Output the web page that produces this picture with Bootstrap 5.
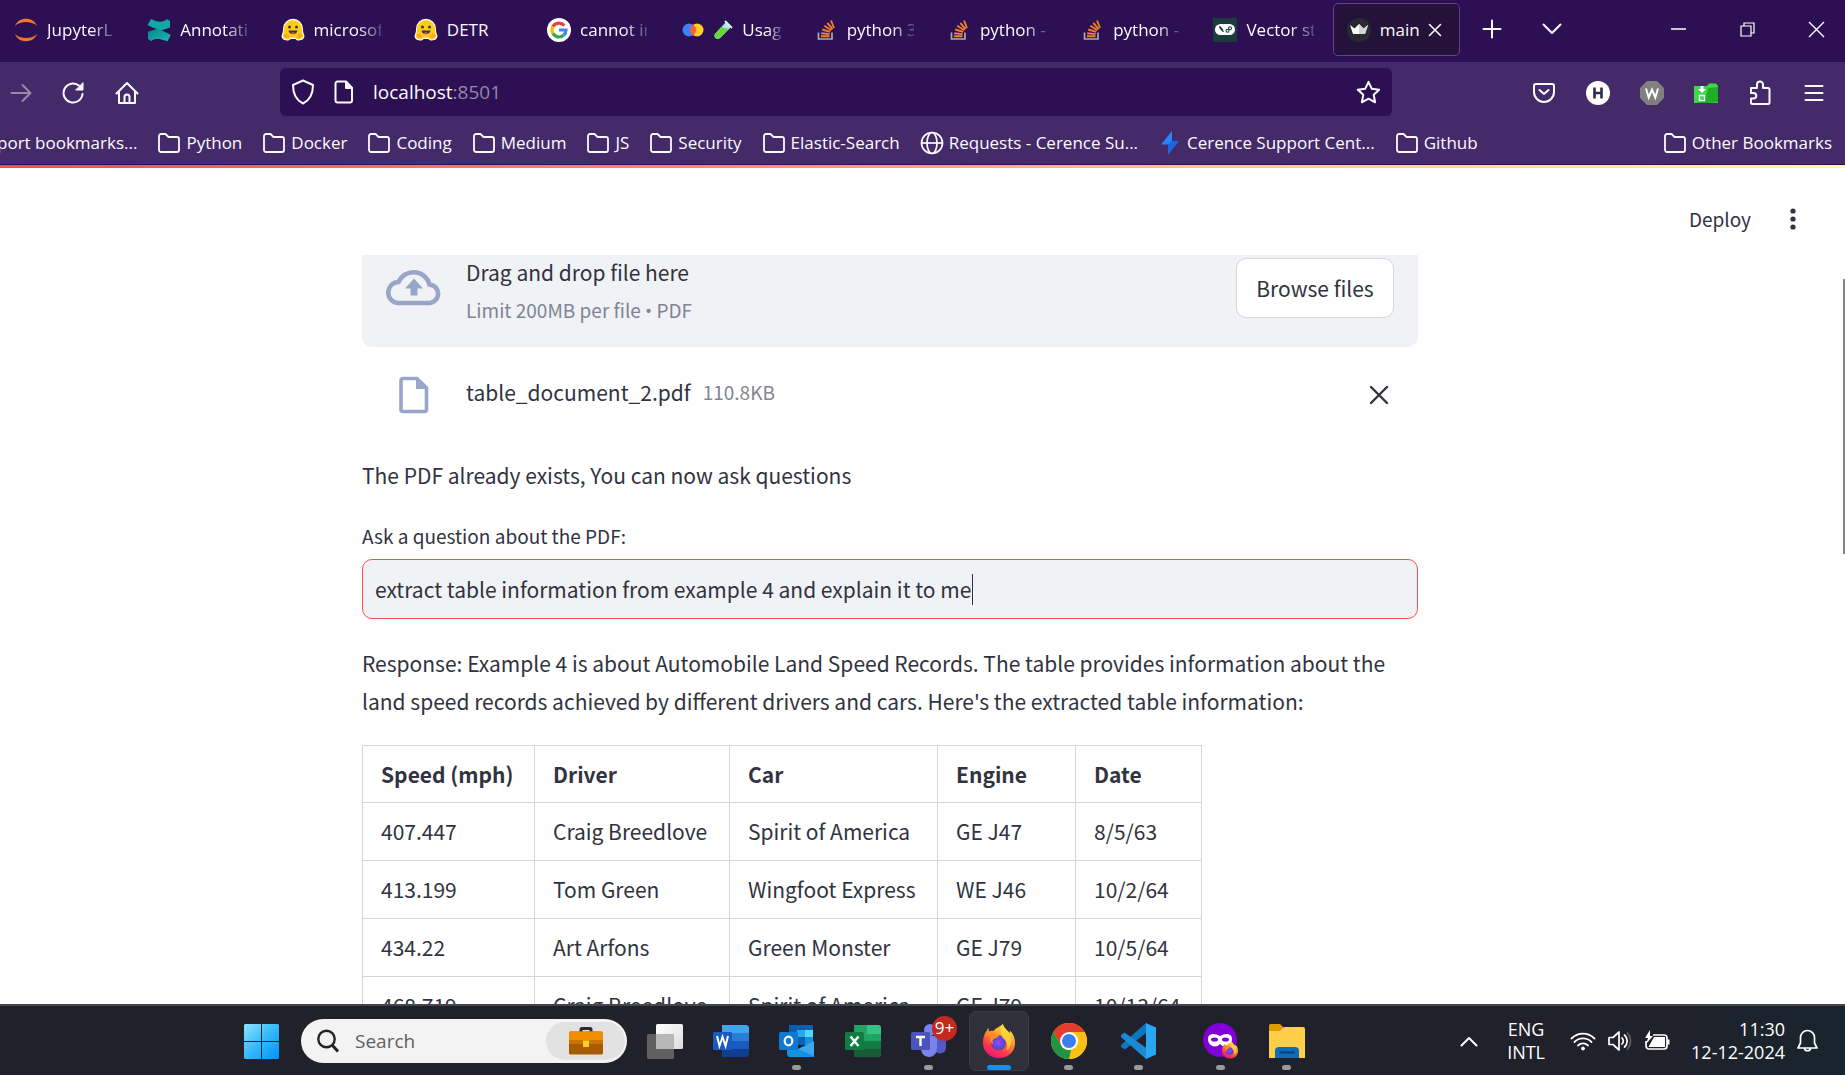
<!DOCTYPE html>
<html lang="en">
<head>
<meta charset="utf-8">
<meta name="viewport" content="width=device-width, initial-scale=1">
<title>main</title>
<link href="https://cdn.jsdelivr.net/npm/bootstrap@5.3.0/dist/css/bootstrap.min.css" rel="stylesheet">
<style>
:root{--deep:#2d1054;--bar:#452a69;--ink:#31333f;--panel:#f0f2f6;--ui:"Open Sans","Noto Sans",sans-serif;--app:"Noto Sans CJK SC","Source Sans Pro",sans-serif}
body{font-family:var(--ui);color:var(--ink);background:#fff;overflow:hidden}
svg{display:block;flex:none}
button,.plain{background:none;border:0;padding:0;color:inherit;text-decoration:none}
.chrome-ui{color:#fbfbfe;font-size:17px}
/* tab strip */
.tabstrip{background:var(--deep);height:62px}
.tabs{display:grid;grid-template-columns:repeat(11,1fr);width:1466px;height:56px;padding-top:3px}
.tab-item{margin-right:6px;padding:0 12px 0 13px;border:1px solid transparent;border-radius:5px;gap:9px;overflow:hidden;white-space:nowrap}
.tab-item.current{background:#25123a;border-color:#6b3a9f;padding-right:17px}
.tab-label{flex:1;min-width:0;overflow:hidden;text-align:left;-webkit-mask-image:linear-gradient(90deg,#000 65%,transparent 110%);mask-image:linear-gradient(90deg,#000 65%,transparent 110%)}
.tab-label.full{-webkit-mask-image:none;mask-image:none}
.strip-tools{padding-bottom:4px;margin-left:-4px;margin-right:-6px}
.strip-btn{width:60px;display:flex;justify-content:center}
.win-btn{width:69px;display:flex;justify-content:center}
.line-ico{fill:none;stroke:currentColor;stroke-width:2;stroke-linecap:round;stroke-linejoin:round}
/* address row */
.address-row{background:var(--bar);height:60px;padding:0 4px 6px 0}
.nav-group{width:280px}
.nav-btn{width:54px;display:flex;justify-content:center}
.nav-btn.narrow{width:42px}
.urlbox{background:var(--deep);border-radius:6px;height:48px;width:1112px;padding:0 11px;gap:17px}
.urlbox .port{color:#9486ab}
.url-text{font-size:19px}
/* bookmarks */
.bookmarks{background:var(--bar);height:43px;border-bottom:1px solid var(--deep);gap:20px;padding-right:13px;white-space:nowrap}
.bm{gap:5px}
.bm.clipped{margin-left:-3px}
.stripe{height:3px;background:linear-gradient(90deg,#ff4b4b,#ff8f5c 40%,#ffc870 65%,#fffd80)}
/* app */
.app{font-family:var(--app);font-size:21px;line-height:38px;min-height:0;position:relative}
.app-header{height:87px;padding:0 40px 17px 0;gap:30px;font-size:19px}
.scroll-clip{min-height:0;overflow:hidden;padding-right:65px}
.block-col{max-width:1056px;margin:0 auto}
.dropzone{background:var(--panel);border-radius:0 0 10px 10px;height:92px;padding:3px 24px 0}
.cloud{width:80px;padding-top:7px}
.drop-title{line-height:28px;margin-bottom:10px}
.hint{color:#808495;font-size:19px;line-height:28px}
.dot{font-family:var(--ui)}
.fine{color:#85868e;font-size:19px}
.browse{width:158px;height:60px;background:#fff;border:1px solid #d6d6d9;border-radius:10px}
.file-row{padding:28px 29px 0 37px;height:67px}
.file-text{margin-left:37px;gap:12px;padding-bottom:6px}
.note{margin:42px 0 27px}
.ask-label{font-size:19px;line-height:30px;margin-bottom:8px}
.ask{height:60px;background:var(--panel);border:1px solid #ff4b4b;border-radius:10px;color:var(--ink);font-size:21px;padding:0 12px;width:100%;outline:0}
.caret{position:absolute;left:610px;top:15px;width:1px;height:31px;background:#31333f}
.resp{margin:25px 0}
.data{border-collapse:collapse;width:840px;table-layout:fixed}
.c1{width:172px}.c2{width:195px}.c3{width:208px}.c4{width:138px}
.data th,.data td{border:1px solid #d6d6d9;padding:9px 18px 10px;white-space:nowrap}
.data th{font-weight:700;padding-bottom:9px}
.thumb{position:absolute;right:0;top:114px;width:2px;height:275px;background:#85868a}
/* taskbar */
.taskbar{height:71px;border-top:2px solid #45464c;padding:1px 27px 0 244px;background:linear-gradient(90deg,#20212b 90%,#17252d);color:#fff}
.search-pill{width:326px;height:44px;border-radius:22px;background:#f3f3f3;margin-left:22px;padding:3px 2px 3px 16px;gap:16px}
.search-pill input{border:0;background:none;flex:1;min-width:0;font-size:19px;color:#5a5a5a;outline:0;padding:0}
.search-pill input::placeholder{color:#5f5f5f;opacity:1}
.case{width:79px;height:38px;border-radius:19px;background:#e2e2e2}
.apps{gap:6px;margin-left:8px}
.task{width:60px;height:60px;border-radius:7px;position:relative;border:1px solid transparent}
.task.on{background:#2f303a;border-color:#3b3c45}
.task.run::after{content:"";position:absolute;left:50%;bottom:0;width:9px;height:5px;margin-left:-5px;border-radius:3px;background:#9a9a9c}
.task.on::after{width:24px;margin-left:-12px;background:#0a93ff}
.count{position:absolute;left:32px;top:4px;width:25px;height:25px;border-radius:50%;background:#c42b1c;font-size:17px;line-height:24px;text-align:center}
.tray{font-size:18px;line-height:23px}
.lang{width:88px}
.clock{margin-left:21px}
</style>
</head>
<body class="vh-100 d-flex flex-column">
<svg width="0" height="0" class="position-absolute" aria-hidden="true">
<defs>
<symbol id="folder" viewBox="0 0 24 24"><path d="M2 19V5a2 2 0 0 1 2-2h4.500l3 3H20a2 2 0 0 1 2 2v11a2 2 0 0 1-2 2H4a2 2 0 0 1-2-2z" fill="none" stroke="#fbfbfe" stroke-width="1.800"/></symbol>
<symbol id="hug" viewBox="0 0 24 24"><path d="M12 .8a10 10 0 0 1 10 10c0 2 0 3.500 1.200 6.200 1 3-1.600 5.300-5.200 5.500-2 .1-3-.7-3.600-1.600h-4.800c-.6.900-1.600 1.700-3.600 1.600C2.400 22.300-.2 20 .8 17 2 14.300 2 12.800 2 10.800a10 10 0 0 1 10-10z" fill="#fff"/><path d="M12 2a9 9 0 0 1 9 9c0 2 .2 3.800 1 6 .8 2.500-1.500 4.300-4 4.400-2 0-2.700-.8-3.300-1.700H9.300c-.6.900-1.300 1.700-3.300 1.700-2.500-.1-4.800-1.900-4-4.400.8-2.200 1-4 1-6a9 9 0 0 1 9-9z" fill="#ffcc1c"/><path d="M7.500 12.500h9c-.5 2.500-2.200 3.700-4.500 3.700s-4-1.200-4.500-3.700z" fill="#3a3b45"/><path d="M9.500 15.200c1.500-1.200 3.500-1.200 5 0-1.300 1-3.700 1-5 0z" fill="#ef4e4e"/><circle cx="8.500" cy="9" r="1.500" fill="#3a3b45"/><circle cx="15.500" cy="9" r="1.500" fill="#3a3b45"/><path d="M3 16.500l3 3M5 15.500l3 4M21 16.500l-3 3M19 15.500l-3 4" stroke="#f29d1d" stroke-width="1.200"/></symbol>
<symbol id="so" viewBox="0 0 24 24"><path d="M4.500 14.500V21h13.500v-6.500" fill="none" stroke="#a8acb3" stroke-width="1.700"/><path d="M7 18.300h8.500M7.200 15.200l8.400.9M8.200 11.500l8 2.400M10.300 7.800l7 4.400M13.300 4.800l5.300 6.300M17 2.500l3 7.500" stroke="#f48024" stroke-width="1.900"/></symbol>
<linearGradient id="ff" x1=".8" y1="0" x2=".3" y2="1"><stop offset="0" stop-color="#fff44f"/><stop offset=".4" stop-color="#ff9a2b"/><stop offset=".75" stop-color="#ff3647"/><stop offset="1" stop-color="#e31587"/></linearGradient>
<radialGradient id="ffp"><stop offset="0" stop-color="#8a4dff"/><stop offset="1" stop-color="#5b3fc0"/></radialGradient>
<symbol id="fox" viewBox="0 0 36 38"><path d="M22 1c1 4 3 5.500 6 8l1.500 1.500V8C33 11 35 16 35 21c0 9-7 16-17 16S1 30 1 20.500C1 15 3 11 5 8l1.500-3 1 4c1.500-1 3.500-1 5-.5C14 5 18 5 22 1z" fill="url(#ff)"/><circle cx="17.500" cy="21" r="8" fill="url(#ffp)"/><path d="M5 10c3-1.500 6-1 8 1l5 2c-1 2.500-3 3-5.500 4-1.500 1-2 3 0 5-3-.5-4-3-3.500-6z" fill="#ff8b24"/><path d="M22 1c1 4 8 8 9 17 .5 5-2 9-5 11 1.500-4 1-9-3-12-3-2.500-4-9-1-16z" fill="#ffda3a" opacity=".75"/></symbol>
<linearGradient id="win" x1="0" y1="0" x2="1" y2="1"><stop offset="0" stop-color="#8be4ff"/><stop offset=".5" stop-color="#35b9fa"/><stop offset="1" stop-color="#0093fb"/></linearGradient>
<linearGradient id="teal" x1="0" y1="0" x2="1" y2="1"><stop offset="0" stop-color="#00868a"/><stop offset="1" stop-color="#22b8b2"/></linearGradient>
<linearGradient id="sheet" x1="0" y1="0" x2="1" y2="1"><stop offset="0" stop-color="#fff"/><stop offset="1" stop-color="#ddd"/></linearGradient>
</defs></svg>

<header class="chrome-ui flex-shrink-0">
<div class="tabstrip d-flex">
<nav class="tabs flex-shrink-0" aria-label="Tabs">
<button class="tab-item d-flex align-items-center"><svg width="24" height="24" viewBox="0 0 24 24"><path d="M1 8C3 3 7 .8 12 .8S21 3 23 8C20 5 16 4 12 4S4 5 1 8zM1 16c2 5 6 7.200 11 7.200S21 21 23 16c-3 3-7 4-11 4S4 19 1 16z" fill="#f37726"/></svg><span class="tab-label">JupyterL</span></button>
<button class="tab-item d-flex align-items-center"><svg width="24" height="24" viewBox="0 0 24 24"><path d="M4 1L.5 7C4 9 7 10 10 11l-9 3v6.500L4 23c5-4 10-2 16.500 0l3-6c-3-2-6-3.500-9.500-4.500l9-3V3l-3-2c-4 4-10 3-16 0z" fill="#13a7a5"/><path d="M10 11l4 1.500 9.500 4.500-3 6C14 21 9 19 4 23l-3-2.500V14z" fill="url(#teal)"/></svg><span class="tab-label">Annotati</span></button>
<button class="tab-item d-flex align-items-center"><svg width="24" height="24"><use href="#hug"/></svg><span class="tab-label">microsof</span></button>
<button class="tab-item d-flex align-items-center"><svg width="24" height="24"><use href="#hug"/></svg><span class="tab-label full">DETR</span></button>
<button class="tab-item d-flex align-items-center"><svg width="24" height="24" viewBox="0 0 24 24"><circle cx="12" cy="12" r="12" fill="#fff"/><g fill="none" stroke-width="3.200"><path d="M17.300 7.600A7 7 0 0 0 5.900 8.600" stroke="#ea4335"/><path d="M5.900 8.600a7 7 0 0 0 0 6.800" stroke="#fbbc05"/><path d="M5.900 15.400A7 7 0 0 0 16.600 17.300" stroke="#34a853"/><path d="M16.600 17.300A7 7 0 0 0 19 12H12" stroke="#4285f4"/></g></svg><span class="tab-label">cannot in</span></button>
<button class="tab-item d-flex align-items-center"><svg width="24" height="24" viewBox="0 0 24 24"><circle cx="9" cy="12" r="6.500" fill="#3b82f6"/><circle cx="17" cy="12" r="6.500" fill="#ffcf24"/><path d="M13 6.300a7 7 0 0 1 3 5.700 7 7 0 0 1-3 5.700 7 7 0 0 1-3-5.700 7 7 0 0 1 3-5.700z" fill="#ff5a45"/></svg><svg width="20" height="20" viewBox="0 0 20 20"><path d="M13 2l5 5L7 18c-3 2.500-7-1-5-4z" fill="#b5e3f2"/><path d="M8 7l8 2-9 9c-3 2.500-7-1-5-4z" fill="#67d63f"/><path d="M12 1l7 7" stroke="#d6f2fb" stroke-width="2"/></svg><span class="tab-label">Usag</span></button>
<button class="tab-item d-flex align-items-center"><svg width="24" height="24"><use href="#so"/></svg><span class="tab-label">python 3</span></button>
<button class="tab-item d-flex align-items-center"><svg width="24" height="24"><use href="#so"/></svg><span class="tab-label">python -</span></button>
<button class="tab-item d-flex align-items-center"><svg width="24" height="24"><use href="#so"/></svg><span class="tab-label">python -</span></button>
<button class="tab-item d-flex align-items-center"><svg width="24" height="24" viewBox="0 0 24 24"><path d="M0 0h24v24H0z" fill="#1c3c3c"/><rect x="2" y="6" width="20" height="11" rx="5.500" fill="#fff"/><path d="M6 8c2 0 4 3 5 6-2 0-2-1-3-2s-2-2-2-4z" fill="#1c3c3c"/><g fill="none" stroke="#1c3c3c" stroke-width="1.100"><circle cx="14.500" cy="12.800" r="1.500"/><circle cx="17" cy="10.200" r="1.500"/></g></svg><span class="tab-label">Vector st</span></button>
<button class="tab-item current d-flex align-items-center"><svg width="24" height="24" viewBox="0 0 24 24"><circle cx="12" cy="12" r="12" fill="#272a30"/><path d="M3 7l4.500 3.500L12 6l4.500 4.500L21 7l-3 9H6z" fill="#fff"/><path d="M12 6l4.500 4.500L21 7l-3 9h-6z" fill="#d4d4d8"/></svg><span class="tab-label full">main</span><svg class="line-ico" width="14" height="14" viewBox="0 0 14 14"><path d="M1.500 1.500l11 11M12.500 1.500l-11 11" stroke-width="1.600"/></svg></button>
</nav>
<div class="strip-tools d-flex align-items-center flex-grow-1">
<button class="strip-btn" aria-label="New tab"><svg class="line-ico" width="20" height="20" viewBox="0 0 20 20"><path d="M10 1.500v17M1.500 10h17"/></svg></button>
<button class="strip-btn" aria-label="List tabs"><svg class="line-ico" width="20" height="12" viewBox="0 0 20 12"><path d="M1.500 1.500L10 10l8.500-8.500"/></svg></button>
<button class="win-btn ms-auto" aria-label="Minimize"><svg width="15" height="2"><path d="M0 1h15" stroke="#fff" stroke-width="1.500"/></svg></button>
<button class="win-btn" aria-label="Restore"><svg width="15" height="15" viewBox="0 0 15 15" fill="none" stroke="#fff" stroke-width="1.200"><path d="M1 4h10v10H1zM4 4V1h10v10h-3"/></svg></button>
<button class="win-btn" aria-label="Close"><svg width="17" height="17" viewBox="0 0 17 17"><path d="M1 1l15 15M16 1L1 16" stroke="#fff" stroke-width="1.400"/></svg></button>
</div>
</div>

<div class="address-row d-flex align-items-end">
<div class="nav-group d-flex align-items-center h-100 pt-2 flex-shrink-0">
<button class="nav-btn narrow" aria-label="Forward"><svg class="line-ico" width="22" height="20" viewBox="0 0 22 20" stroke-opacity=".45"><path d="M1.500 10h19M12.500 2l8 8-8 8"/></svg></button>
<button class="nav-btn ms-1" aria-label="Reload"><svg class="line-ico" width="24" height="24" viewBox="0 0 24 24"><path d="M21.500 13a9.500 9.500 0 1 1-3.300-8.200L21 7"/><path d="M22 2v7h-7z" fill="currentColor" stroke-width="1"/></svg></button>
<button class="nav-btn" aria-label="Home"><svg class="line-ico" width="24" height="24" viewBox="0 0 24 24"><path d="M1.500 12.500L12 2l10.500 10.500M4 10.500V22h16V10.500M9.500 22v-6a2.500 2.500 0 0 1 5 0v6"/></svg></button>
</div>
<div class="urlbox d-flex align-items-center flex-shrink-1">
<svg class="line-ico" width="24" height="26" viewBox="0 0 24 26"><path d="M12 1.500l10 4.500c0 9-3 15-10 18.500C5 21 2 15 2 6z"/></svg>
<svg class="line-ico" width="24" height="24" viewBox="0 0 24 24"><path d="M5.500 1.500H14L20 8v12.500a2 2 0 0 1-2 2H5.500a2 2 0 0 1-2-2v-17a2 2 0 0 1 2-2z"/><path d="M14 2v6h6z" fill="currentColor"/></svg>
<span class="url-text flex-grow-1">localhost<span class="port">:8501</span></span>
<button aria-label="Bookmark"><svg class="line-ico" width="25" height="25" viewBox="0 0 25 25"><path d="M12.500 1.800l3.200 6.900 7.500 1-5.500 5.100 1.400 7.500-6.600-3.600-6.600 3.600 1.400-7.500L1.800 9.700l7.500-1z"/></svg></button>
</div>
<div class="d-flex align-items-center h-100 pt-2 ms-auto">
<button class="nav-btn" aria-label="Pocket"><svg class="line-ico" width="22" height="22" viewBox="0 0 22 22"><path d="M3 2h16a2 2 0 0 1 2 2v6a10 10 0 0 1-20 0V4a2 2 0 0 1 2-2zM6.500 8L11 12l4.500-4"/></svg></button>
<button class="nav-btn" aria-label="Extension H"><svg width="24" height="24" viewBox="0 0 24 24"><circle cx="12" cy="12" r="12" fill="#fff"/><path d="M8.500 6.500v11M15.500 6.500v11M8.500 12h7" stroke="#33264f" stroke-width="2.600"/></svg></button>
<button class="nav-btn" aria-label="Extension W"><svg width="24" height="24" viewBox="0 0 24 24"><path d="M7 0h10l7 7v10l-7 7H7l-7-7V7z" fill="#808080"/><path d="M6 7.500l2.700 9L12 8.500l3.300 8 2.700-9" fill="none" stroke="#fff" stroke-width="2"/></svg></button>
<button class="nav-btn" aria-label="Downloads folder"><svg width="24" height="20" viewBox="0 0 24 20"><path d="M0 3h13l2-2.500h7L24 3v17H0z" fill="#3fd648"/><path d="M14 5l10-1v15l-10 1H2c6-1 11-7 12-15z" fill="#1fae27"/><path d="M6.500 3v3H4l4 4 4-4H9.500V3z" fill="#fff"/><rect x="5.500" y="12.500" width="5" height="5" fill="none" stroke="#fff" stroke-width="1.500"/></svg></button>
<button class="nav-btn" aria-label="Extensions"><svg class="line-ico" width="22" height="26" viewBox="0 0 22 26"><path d="M2 13V8h6V4.500a3 3 0 0 1 6 0V8h5a1.500 1.500 0 0 1 1.500 1.500v13A1.500 1.500 0 0 1 19 24H3.500A1.500 1.500 0 0 1 2 22.500V18.500h2.500a2.700 2.700 0 0 0 0-5.500z"/></svg></button>
<button class="nav-btn" aria-label="Menu"><svg class="line-ico" width="20" height="18" viewBox="0 0 20 18"><path d="M1.500 2h17M1.500 9h17M1.500 16h17"/></svg></button>
</div>
</div>

<nav class="bookmarks d-flex align-items-center" aria-label="Bookmarks">
<a href="#" class="plain bm clipped d-flex align-items-center">port bookmarks...</a>
<a href="#" class="plain bm d-flex align-items-center"><svg width="24" height="24"><use href="#folder"/></svg>Python</a>
<a href="#" class="plain bm d-flex align-items-center"><svg width="24" height="24"><use href="#folder"/></svg>Docker</a>
<a href="#" class="plain bm d-flex align-items-center"><svg width="24" height="24"><use href="#folder"/></svg>Coding</a>
<a href="#" class="plain bm d-flex align-items-center"><svg width="24" height="24"><use href="#folder"/></svg>Medium</a>
<a href="#" class="plain bm d-flex align-items-center"><svg width="24" height="24"><use href="#folder"/></svg>JS</a>
<a href="#" class="plain bm d-flex align-items-center"><svg width="24" height="24"><use href="#folder"/></svg>Security</a>
<a href="#" class="plain bm d-flex align-items-center"><svg width="24" height="24"><use href="#folder"/></svg>Elastic-Search</a>
<a href="#" class="plain bm d-flex align-items-center"><svg width="24" height="24" viewBox="0 0 24 24" fill="none" stroke="#fbfbfe" stroke-width="1.700"><circle cx="12" cy="12" r="10.500"/><ellipse cx="12" cy="12" rx="5" ry="10.500"/><path d="M2 12h20"/></svg>Requests - Cerence Su...</a>
<a href="#" class="plain bm d-flex align-items-center"><svg width="24" height="24" viewBox="0 0 24 24"><path d="M14 0L3 13.500h8L14 10z" fill="#2684ff"/><path d="M10 24V14l3.500-4H21z" fill="#1868e0"/></svg>Cerence Support Cent...</a>
<a href="#" class="plain bm d-flex align-items-center"><svg width="24" height="24"><use href="#folder"/></svg>Github</a>
<a href="#" class="plain bm d-flex align-items-center ms-auto"><svg width="24" height="24"><use href="#folder"/></svg>Other Bookmarks</a>
</nav>
</header>

<main class="app flex-grow-1 d-flex flex-column">
<div class="stripe flex-shrink-0"></div>
<div class="app-header d-flex justify-content-end align-items-end flex-shrink-0">
<button>Deploy</button>
<button class="py-2 px-2" aria-label="Main menu"><svg width="8" height="22" viewBox="0 0 8 22" fill="#31333f"><circle cx="4" cy="3" r="2.600"/><circle cx="4" cy="11" r="2.600"/><circle cx="4" cy="19" r="2.600"/></svg></button>
</div>
<div class="scroll-clip flex-grow-1">
<div class="block-col">
<section class="dropzone d-flex align-items-start">
<div class="cloud"><svg width="56" height="42" viewBox="0 0 56 42"><path d="M13 38a10.500 10.500 0 0 1-.5-21A16.500 16.500 0 0 1 43.500 19.500 9.300 9.300 0 0 1 44 38z" fill="none" stroke="#98a6c8" stroke-width="4.600"/><path d="M28 13.500l9 10h-5.500v7h-7v-7H19z" fill="#98a6c8"/></svg></div>
<div class="flex-grow-1"><div class="drop-title">Drag and drop file here</div><div class="hint">Limit 200MB per file <span class="dot">•</span> PDF</div></div>
<button class="browse">Browse files</button>
</section>
<div class="file-row d-flex align-items-center">
<svg width="30" height="38" viewBox="0 0 30 38"><path d="M4 2.500h14L27.500 12v21.500a2 2 0 0 1-2 2H4a2 2 0 0 1-2-2v-29a2 2 0 0 1 2-2z" fill="none" stroke="#98a6c8" stroke-width="3.600"/><path d="M17 1.500V13h11.500z" fill="#98a6c8"/></svg>
<div class="file-text d-flex align-items-center me-auto"><span>table_document_2.pdf</span><span class="fine">110.8KB</span></div>
<button aria-label="Remove file"><svg class="line-ico" width="20" height="20" viewBox="0 0 20 20"><path d="M2 2l16 16M18 2L2 18" stroke-width="2.400"/></svg></button>
</div>
<p class="note">The PDF already exists, You can now ask questions</p>
<label class="ask-label d-block" for="q">Ask a question about the PDF:</label>
<div class="position-relative"><input class="ask d-block" id="q" type="text" value="extract table information from example 4 and explain it to me"><span class="caret"></span></div>
<p class="resp">Response: Example 4 is about Automobile Land Speed Records. The table provides information about the land speed records achieved by different drivers and cars. Here's the extracted table information:</p>
<table class="data">
<colgroup><col class="c1"><col class="c2"><col class="c3"><col class="c4"><col></colgroup>
<thead><tr><th>Speed (mph)</th><th>Driver</th><th>Car</th><th>Engine</th><th>Date</th></tr></thead>
<tbody>
<tr><td>407.447</td><td>Craig Breedlove</td><td>Spirit of America</td><td>GE J47</td><td>8/5/63</td></tr>
<tr><td>413.199</td><td>Tom Green</td><td>Wingfoot Express</td><td>WE J46</td><td>10/2/64</td></tr>
<tr><td>434.22</td><td>Art Arfons</td><td>Green Monster</td><td>GE J79</td><td>10/5/64</td></tr>
<tr><td>468.719</td><td>Craig Breedlove</td><td>Spirit of America</td><td>GE J79</td><td>10/13/64</td></tr>
</tbody>
</table>
</div>
</div>
<span class="thumb"></span>
</main>

<footer class="taskbar d-flex align-items-center flex-shrink-0">
<button aria-label="Start"><svg width="35" height="35" viewBox="0 0 35 35"><path d="M1 0h16v17H0V1zM18 0h16l1 1v16H18zM0 18h17v17H1l-1-1zM18 18h17v16l-1 1H18z" fill="url(#win)"/></svg></button>
<div class="search-pill d-flex align-items-center">
<svg width="22" height="24" viewBox="0 0 22 24" fill="none" stroke="#242424" stroke-width="2.400"><circle cx="9.500" cy="10" r="8.200"/><path d="M15 16l6 6.500" stroke-width="3"/></svg>
<input type="text" placeholder="Search" aria-label="Search">
<button class="case d-flex align-items-center justify-content-center" aria-label="Search highlights"><svg width="34" height="28" viewBox="0 0 34 28"><path d="M12 5V2.500Q12 1.500 13 1.500h8q1 0 1 1V5" fill="none" stroke="#2b2b2b" stroke-width="3"/><rect y="4.500" width="34" height="23" rx="1.500" fill="#a85a00"/><path d="M0 6q0-1.500 1.500-1.500h31Q34 4.500 34 6v10H0z" fill="#ef8e00"/><path d="M0 13h34v4H0z" fill="#c97300"/><rect x="14" y="13.500" width="6" height="6.500" fill="#ffd21e"/></svg></button>
</div>
<div class="apps d-flex">
<button class="task d-flex align-items-center justify-content-center" aria-label="Task view"><svg width="36" height="35" viewBox="0 0 36 35"><rect x="9" y="0" width="27" height="25" rx="1.500" fill="url(#sheet)"/><rect y="10" width="27" height="25" rx="1.500" fill="#606060"/><path d="M9 10h18v15H9z" fill="#b8b8b8"/></svg></button>
<button class="task d-flex align-items-center justify-content-center" aria-label="Word"><svg width="36" height="32" viewBox="0 0 36 32"><path d="M9 0h25l2 2v7H9z" fill="#41a5ee"/><path d="M9 8h27v8H9z" fill="#2b7cd3"/><path d="M9 16h27v8H9z" fill="#185abd"/><path d="M9 24h27v6l-2 2H9z" fill="#103f91"/><rect y="7" width="19" height="18" rx="1.500" fill="#185abd"/><path d="M4 11l2.500 10 3-9 3 9L15 11" fill="none" stroke="#fff" stroke-width="2"/></svg></button>
<button class="task run d-flex align-items-center justify-content-center" aria-label="Outlook"><svg width="36" height="32" viewBox="0 0 36 32"><path d="M10 0h24v20H10z" fill="#0a5fb0"/><path d="M18 5h8v7h-8z" fill="#28a8ea"/><path d="M26 5h8v7h-8z" fill="#50d9ff"/><path d="M18 12h8v8h-8z" fill="#0364b8"/><path d="M26 12h8v8h-8z" fill="#1490df"/><path d="M8 19l12 5 15-7v15H10l-2-2z" fill="#1490df"/><path d="M19 24l16-8v15z" fill="#3ba7ee"/><rect y="7" width="19" height="18" rx="1.500" fill="#0f78d4"/><ellipse cx="9.500" cy="16" rx="3.800" ry="4.300" fill="none" stroke="#fff" stroke-width="2.200"/></svg></button>
<button class="task d-flex align-items-center justify-content-center" aria-label="Excel"><svg width="36" height="32" viewBox="0 0 36 32"><path d="M9 0h25l2 2v28l-2 2H9z" fill="#21a366"/><path d="M22 0h12l2 2v7H22z" fill="#33c481"/><path d="M9 16h27v8H9z" fill="#107c41"/><path d="M9 24h27v6l-2 2H9z" fill="#185c37"/><rect y="7" width="19" height="18" rx="1.500" fill="#107c41"/><path d="M5.500 11.500l8 9.500M13.500 11.500l-8 9.500" stroke="#fff" stroke-width="2.400"/></svg></button>
<button class="task run d-flex align-items-center justify-content-center" aria-label="Teams"><svg width="36" height="34" viewBox="0 0 36 34"><circle cx="19" cy="6" r="6" fill="#7b83eb"/><path d="M22 13h13v11a6 6 0 0 1-10 4z" fill="#5059c9"/><path d="M10 12h16v12c0 12-16 12-16 0z" fill="#7b83eb"/><rect y="8" width="19" height="18" rx="1.500" fill="#4b53bc"/><path d="M5 13h9M9.500 13v9" stroke="#fff" stroke-width="2.400"/></svg><span class="count">9+</span></button>
<button class="task on run ms-1 d-flex align-items-center justify-content-center" aria-label="Firefox"><svg width="34" height="36"><use href="#fox"/></svg></button>
<button class="task run ms-1 d-flex align-items-center justify-content-center" aria-label="Chrome"><svg width="36" height="36" viewBox="0 0 36 36"><circle cx="18" cy="18" r="18" fill="#fbc116"/><path d="M2.400 9A18 18 0 0 1 33.600 9H18L10.200 22.500z" fill="#e33b2e"/><path d="M2.400 9l7.800 13.500A9 9 0 0 0 20 26.800L18 36A18 18 0 0 1 2.400 9z" fill="#229342"/><path d="M18 9h15.600A18 18 0 0 1 18 36l7.800-13.500z" fill="#fbc116"/><circle cx="18" cy="18" r="9" fill="#fff"/><circle cx="18" cy="18" r="7" fill="#3b7ded"/></svg></button>
<button class="task run ms-1 d-flex align-items-center justify-content-center" aria-label="Visual Studio Code"><svg width="36" height="36" viewBox="0 0 36 36"><path d="M26 0l-1 10L4 26.500 0 24v-2L25 0z" fill="#0d76bd"/><path d="M3.500 9.500L0 12v2l25 22h1V25.500z" fill="#1a8ad4"/><path d="M25 0l10 4.500V31.500L25 36z" fill="#2aa6f2"/></svg></button>
<button class="task run ms-3 d-flex align-items-center justify-content-center" aria-label="Private Firefox"><svg width="36" height="36" viewBox="0 0 36 36"><circle cx="17" cy="17" r="17" fill="#8000d7"/><path d="M5 16c0-6 7-6 12-3 5-3 12-3 12 3 0 7-8 10-12 5-4 5-12 2-12-5z" fill="#fff"/><ellipse cx="11.500" cy="16.500" rx="3.500" ry="2" fill="#8000d7"/><ellipse cx="22.500" cy="16.500" rx="3.500" ry="2" fill="#8000d7"/><svg x="18" y="18" width="18" height="18"><use href="#fox"/></svg></svg></button>
<button class="task run d-flex align-items-center justify-content-center" aria-label="File Explorer"><svg width="36" height="34" viewBox="0 0 36 34"><path d="M0 1.500Q0 0 1.500 0H11l4 4v8H0z" fill="#e09b00"/><path d="M0 7h11l4-4h19q2 0 2 2v29H0z" fill="#ffd047"/><path d="M6 34V27q0-4 4-4h16q4 0 4 4v7z" fill="#0f6cbd"/><path d="M10.500 28.500h15" stroke="#0a3f78" stroke-width="2"/></svg></button>
</div>
<div class="tray d-flex align-items-center ms-auto">
<button aria-label="Show hidden icons"><svg class="line-ico" width="18" height="11" viewBox="0 0 18 11"><path d="M1.500 9.500L9 2l7.500 7.500"/></svg></button>
<button class="lang text-center ms-1">ENG<br>INTL</button>
<button class="d-flex align-items-center gap-2" aria-label="Network, volume, battery">
<svg width="26" height="20" viewBox="0 0 26 20" fill="none" stroke="#fff" stroke-width="1.800" stroke-linecap="round"><path d="M1.500 7.500a16 16 0 0 1 23 0M4.500 11a12 12 0 0 1 17 0M8 14.500a7 7 0 0 1 10 0"/><circle cx="13" cy="17.500" r="1.500" fill="#fff" stroke-width="1"/></svg>
<svg class="ms-1" width="25" height="22" viewBox="0 0 25 22" fill="none" stroke="#fff" stroke-width="1.700" stroke-linecap="round" stroke-linejoin="round"><path d="M1 7.500h4L11 2v18l-6-5.500H1zM14 8a4.500 4.500 0 0 1 0 6M16.500 5a8 8 0 0 1 0 12"/><path d="M19.500 3a12 12 0 0 1 0 16" stroke="#5b5d66"/></svg>
<svg class="ms-1" width="25" height="22" viewBox="0 0 25 22"><path d="M8 5h11a3 3 0 0 1 3 3v8a3 3 0 0 1-3 3H4a3 3 0 0 1-3-3v-5" fill="none" stroke="#fff" stroke-width="1.700"/><path d="M9 7h11v10H3.500zM22 9.500h2.500v5H22z" fill="#fff"/><path d="M5 0L0 8h3L1 14l7-8H5z" fill="#fff"/></svg>
</button>
<button class="clock text-end">11:30<br>12-12-2024</button>
<button class="ms-2 ps-1" aria-label="Notifications"><svg width="21" height="24" viewBox="0 0 21 24" fill="none" stroke="#fff" stroke-width="1.700" stroke-linejoin="round"><path d="M10.500 1.500a7 7 0 0 1 7 7V14l2.500 5H1l2.500-5V8.500a7 7 0 0 1 7-7zM7.500 19.500c.5 3 5.500 3 6 0"/></svg></button>
</div>
</footer>
<script src="https://cdn.jsdelivr.net/npm/bootstrap@5.3.0/dist/js/bootstrap.bundle.min.js"></script>
</body>
</html>
